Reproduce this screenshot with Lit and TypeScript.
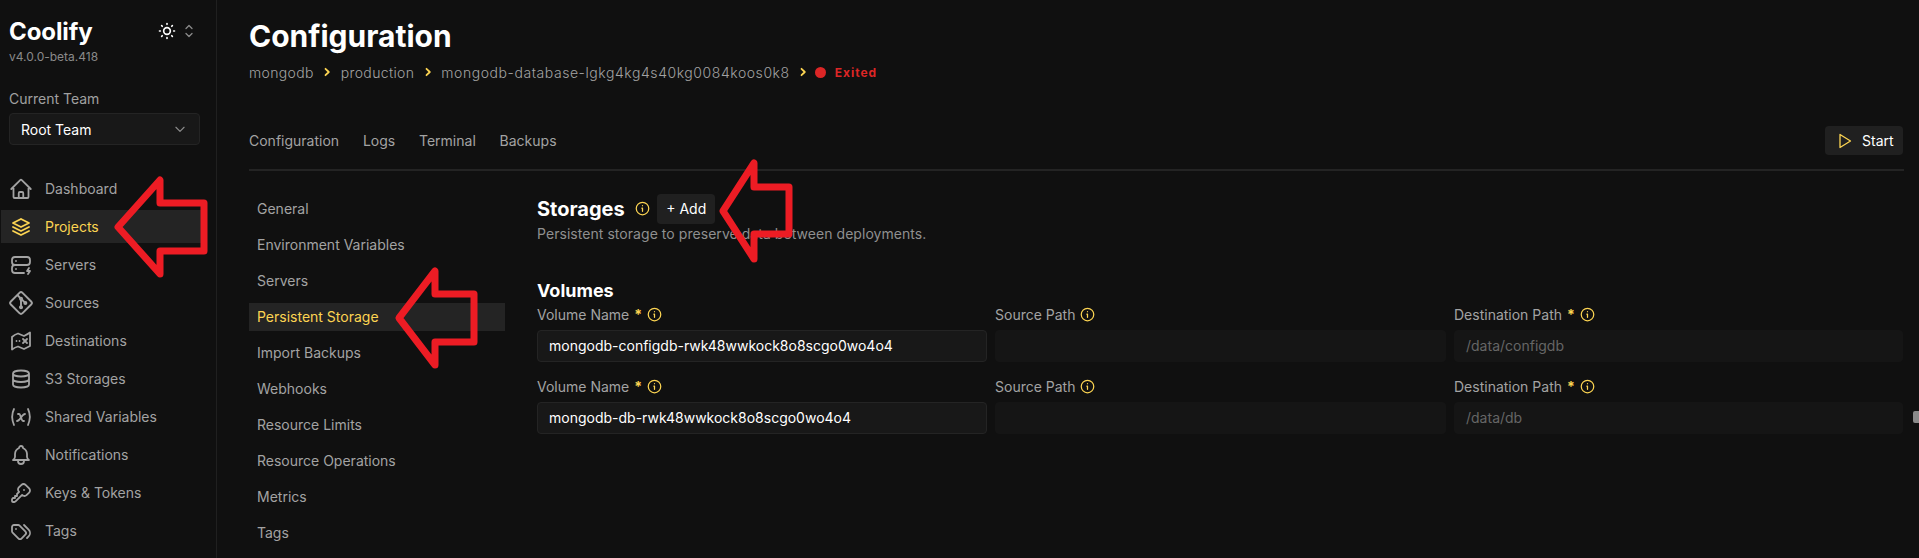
import { LitElement, html, css, svg } from "lit";
import { customElement } from "lit/decorators.js";

const ic = (d: string) => svg`<path d=${d}></path>`;
const NAV: [string, string][] = [
  ["Dashboard", "m2.25 12 8.954-8.955a1.126 1.126 0 0 1 1.591 0L21.75 12M4.5 9.75v10.125c0 .621.504 1.125 1.125 1.125H9.75v-4.875c0-.621.504-1.125 1.125-1.125h2.25c.621 0 1.125.504 1.125 1.125V21h4.125c.621 0 1.125-.504 1.125-1.125V9.75M8.25 21h8.25"],
  ["Projects", "M12 4L4 8l8 4 8-4-8-4M4 12l8 4 8-4M4 16l8 4 8-4"],
  ["Servers", "M3 7a3 3 0 0 1 3-3h12a3 3 0 0 1 3 3v2a3 3 0 0 1-3 3H6a3 3 0 0 1-3-3zM15 20H6a3 3 0 0 1-3-3v-2a3 3 0 0 1 3-3h12M7 8v.01M7 16v.01M20 15l-2 3h3l-2 3"],
  ["Sources", "M15 12a1 1 0 1 0 2 0a1 1 0 1 0-2 0M11 8a1 1 0 1 0 2 0a1 1 0 1 0-2 0M11 16a1 1 0 1 0 2 0a1 1 0 1 0-2 0M12 15V9M15 11l-2-2M11 7L9.1 5.1M13.446 2.6l7.955 7.954a2.045 2.045 0 0 1 0 2.892l-7.955 7.955a2.045 2.045 0 0 1-2.892 0l-7.955-7.955a2.045 2.045 0 0 1 0-2.892l7.955-7.955a2.045 2.045 0 0 1 2.892 0z"],
  ["Destinations", "M3 8C5 6 7 5 9 4.500L15 7C17 6 19 5 21 3.500V17C19 18 17 19 15 20L9 17.500C7 18 5 19 3 20.500zM7.500 12h.01M10.500 12h.01M14 10l4 4M18 10l-4 4"],
  ["S3 Storages", "M4 6.500a8 3 0 1 0 16 0a8 3 0 1 0-16 0M4 6.500V12a8 3 0 0 0 16 0V6.500M4 12v5.500a8 3 0 0 0 16 0V12"],
  ["Shared Variables", "M5 4c-2.500 5-2.500 10 0 16M19 4c2.500 5 2.500 10 0 16M9 9h1c1 0 1 1 2.016 3.527C13 15 13 16 14 16h1M8 16c1.500 0 3-2 4-3.500S14.500 9 16 9"],
  ["Notifications", "M10 5a2 2 0 1 1 4 0a7 7 0 0 1 4 6v3a4 4 0 0 0 2 3H4a4 4 0 0 0 2-3v-3a7 7 0 0 1 4-6M9 17v1a3 3 0 0 0 6 0v-1"],
  ["Keys & Tokens", "M16.555 3.843l3.602 3.602a2.877 2.877 0 0 1 0 4.069l-2.643 2.643a2.877 2.877 0 0 1-4.069 0l-.301-.301l-6.558 6.558a2 2 0 0 1-1.239.578l-.175.008H4.000a1 1 0 0 1-.993-.883L3 20.000v-1.172a2 2 0 0 1 .467-1.284l.119-.13l.414-.414h2v-2h2v-2l2.144-2.144l-.301-.301a2.877 2.877 0 0 1 0-4.069l2.643-2.643a2.877 2.877 0 0 1 4.069 0zM15 9h.01"],
  ["Tags", "M3 8v4.172a2 2 0 0 0 .586 1.414l5.710 5.710a2.410 2.410 0 0 0 3.408 0l3.592-3.592a2.410 2.410 0 0 0 0-3.408l-5.710-5.710A2 2 0 0 0 9.172 6H5a2 2 0 0 0-2 2zM18 19l1.592-1.592a4.820 4.820 0 0 0 0-6.816L15 6M7 10h-.01"],
];
const SUB = ["General", "Environment Variables", "Servers", "Persistent Storage", "Import Backups", "Webhooks", "Resource Limits", "Resource Operations", "Metrics", "Tags"];
const VOLS = [
  ["mongodb-configdb-rwk48wwkock8o8scgo0wo4o4", "/data/configdb"],
  ["mongodb-db-rwk48wwkock8o8scgo0wo4o4", "/data/db"],
];

const info = html`<svg class="info" viewBox="0 0 24 24" fill="none" stroke="#fcd452" stroke-width="2" stroke-linecap="round" stroke-linejoin="round"><circle cx="12" cy="12" r="10"></circle><path d="M12 16.500v-5h-1M12 7.500h.01"></path></svg>`;
const crumb = html`<svg class="crumb" viewBox="0 0 10 10" fill="none" stroke="#fcd452" stroke-width="1.800" stroke-linecap="round" stroke-linejoin="round"><path d="M3.500 1.800 6.800 5 3.500 8.200"></path></svg>`;
const arrow = (p: string) => svg`<polygon points=${p}></polygon>`;

@customElement("app-root")
export class AppRoot extends LitElement {
  static styles = css`
    :host { display: block; position: relative; width: 1919px; height: 558px; overflow: hidden; background: #101010; color: #fff; font-family: Inter, "Noto Sans", sans-serif; font-size: 14px; }
    .page { display: flex; height: 558px; }
    aside { width: 216px; flex: none; border-right: 1px solid #202020; height: 558px; box-sizing: content-box; }
    .brand { display: flex; justify-content: space-between; padding: 18px 0 0 9px; height: 50px; }
    .logo { font-size: 24px; line-height: 28px; font-weight: 700; letter-spacing: -.1px; }
    .ver { font-size: 12px; line-height: 16px; color: #8a8a8a; margin-top: 3px; }
    .theme { display: flex; align-items: center; gap: 6px; height: 26px; margin-right: 21px; }
    .theme svg { display: block; }
    .sun { width: 20px; height: 20px; }
    .updown { width: 12px; height: 14px; }
    .team { padding: 22px 16px 0 9px; }
    .team label { display: block; color: #a0a0a0; line-height: 17px; margin-bottom: 6px; }
    .select { display: flex; align-items: center; justify-content: space-between; height: 32px; box-sizing: border-box; padding: 0 12px 0 11px; background: #181818; border: 1px solid #242424; border-radius: 4px; font-size: 14px; }
    .select svg { width: 14px; height: 14px; }
    nav { display: flex; flex-direction: column; gap: 5px; padding: 27px 0 0 1px; }
    .item { display: flex; align-items: center; gap: 12px; height: 33px; width: 204px; padding-left: 8px; box-sizing: border-box; color: #a3a3a3; }
    .item svg { width: 24px; height: 24px; flex: none; fill: none; stroke: #a3a3a3; stroke-width: 1.800; stroke-linecap: round; stroke-linejoin: round; }
    .item:nth-child(4) svg { transform: scale(1.080); }
    .item.active { background: #242424; color: #fcd452; }
    .item.active svg { stroke: #fcd452; }
    main { flex: 1; padding: 0 15px 0 32px; min-width: 0; }
    h1 { margin: 0; padding-top: 18px; font-size: 30px; line-height: 36px; font-weight: 700; }
    .crumbs { display: flex; align-items: center; height: 20px; margin-top: 8px; color: #a3a3a3; font-weight: 300; letter-spacing: .35px; }
    .wide { letter-spacing: .56px; }
    .crumb { width: 10px; height: 10px; margin: 0 8.500px; flex: none; }
    .dot { width: 11px; height: 11px; background: #dc2626; border-radius: 50%; margin: 0 9px 0 -2px; flex: none; }
    .exited { color: #dc2626; font-size: 12px; font-weight: 700; letter-spacing: 1px; }
    .tabs { display: flex; align-items: center; justify-content: space-between; height: 29px; margin-top: 44px; }
    .tablist { display: flex; gap: 23.800px; color: #a3a3a3; }
    .btn { display: flex; align-items: center; background: #202020; border-radius: 4px; color: #fff; font-size: 14px; }
    .start { height: 29px; width: 78px; box-sizing: border-box; padding-left: 13px; gap: 10px; margin-right: 1px; }
    .start svg { width: 14px; height: 16px; }
    .rule { height: 1.500px; background: #242424; margin-top: 14px; }
    .body { display: flex; gap: 32px; margin-top: 22px; }
    .subnav { width: 256px; flex: none; display: flex; flex-direction: column; color: #a3a3a3; margin-top: 2px; }
    .subnav div { height: 28px; line-height: 28px; padding-left: 8px; margin-bottom: 8px; }
    .subnav .active { background: #242424; color: #fcd452; }
    .content { flex: 1; min-width: 0; }
    .h2row { display: flex; align-items: center; height: 30px; margin-top: 1px; }
    h2 { margin: 0; font-size: 20px; line-height: 28px; font-weight: 700; }
    .info { width: 15px; height: 15px; flex: none; }
    .h2row .info { margin: 0 7px 0 10px; }
    .add { height: 30px; width: 58px; justify-content: center; padding-left: 1px; box-sizing: border-box; font-size: 14px; }
    .desc { color: #8f8f8f; line-height: 20px; letter-spacing: .05px; }
    h3 { margin: 33px 0 1px; font-size: 18px; line-height: 28px; font-weight: 700; }
    .vrow { display: grid; grid-template-columns: 450px 451px 449px; gap: 8px; margin-bottom: 16px; }
    .vrow > div { display: flex; flex-direction: column; }
    .lab { display: flex; align-items: center; height: 18px; margin-bottom: 6px; color: #a3a3a3; }
    .star { color: #fcd452; font-weight: 700; margin: 0 5px; line-height: 14px; }
    .lab .info { margin-left: 5px; }
    .star + .info { margin-left: 0; }
    .input { height: 32px; box-sizing: border-box; padding: 0 11px; line-height: 30px; background: #181818; border: 1px solid #242424; border-radius: 4px; }
    .input.off { background: #151515; border-color: #151515; color: #666; }
    .thumb { position: absolute; left: 1913px; top: 411px; width: 6px; height: 12px; background: #8a8a8a; border-radius: 2px 0 0 2px; }
    .overlay { position: absolute; inset: 0; width: 1919px; height: 558px; pointer-events: none; }
    .overlay polygon { fill: none; stroke: #ed1c24; stroke-width: 7; stroke-linejoin: round; }
  `;

  render() {
    return html`
      <div class="page">
        <aside>
          <div class="brand">
            <div>
              <div class="logo">Coolify</div>
              <div class="ver">v4.0.0-beta.418</div>
            </div>
            <div class="theme">
              <svg class="sun" viewBox="0 0 24 24" fill="none" stroke="#fff" stroke-width="2" stroke-linecap="round"><path d="M8 12a4 4 0 1 0 8 0a4 4 0 1 0-8 0M3 12h1m8-9v1m8 8h1m-9 8v1M5.600 5.600l.7.7m12.100-.7l-.7.7m0 11.400l.7.7M6.300 17.700l-.7.7"></path></svg>
              <svg class="updown" viewBox="0 0 12 14" fill="none" stroke="#8a8a8a" stroke-width="1.300" stroke-linecap="round" stroke-linejoin="round"><path d="M3 4.500 6 1.500l3 3M3 9.500l3 3 3-3"></path></svg>
            </div>
          </div>
          <div class="team">
            <label>Current Team</label>
            <div class="select">Root Team
              <svg viewBox="0 0 24 24" fill="none" stroke="#8a8a8a" stroke-width="2" stroke-linecap="round" stroke-linejoin="round"><path d="M5 9l7 7 7-7"></path></svg>
            </div>
          </div>
          <nav>
            ${NAV.map(([n, d]) => html`<div class="item ${n === "Projects" ? "active" : ""}"><svg viewBox="0 0 24 24">${ic(d)}</svg>${n}</div>`)}
          </nav>
        </aside>
        <main>
          <h1>Configuration</h1>
          <div class="crumbs">
            mongodb${crumb}production${crumb}<span class="wide">mongodb-database-lgkg4kg4s40kg0084koos0k8</span>${crumb}<span class="dot"></span><span class="exited">Exited</span>
          </div>
          <div class="tabs">
            <div class="tablist"><span>Configuration</span><span>Logs</span><span>Terminal</span><span>Backups</span></div>
            <div class="btn start">
              <svg viewBox="0 0 14 16" fill="none" stroke="#fcd452" stroke-width="1.300" stroke-linejoin="round"><path d="M2 1.500 12.500 8 2 14.500z"></path></svg>
              Start
            </div>
          </div>
          <div class="rule"></div>
          <div class="body">
            <div class="subnav">
              ${SUB.map((s) => html`<div class=${s === "Persistent Storage" ? "active" : ""}>${s}</div>`)}
            </div>
            <div class="content">
              <div class="h2row"><h2>Storages</h2>${info}<div class="btn add">+ Add</div></div>
              <div class="desc">Persistent storage to preserve data between deployments.</div>
              <h3>Volumes</h3>
              ${VOLS.map(([name, dest]) => html`
                <div class="vrow">
                  <div><div class="lab">Volume Name<span class="star">*</span>${info}</div><div class="input">${name}</div></div>
                  <div><div class="lab">Source Path${info}</div><div class="input off"></div></div>
                  <div><div class="lab">Destination Path<span class="star">*</span>${info}</div><div class="input off">${dest}</div></div>
                </div>`)}
            </div>
          </div>
        </main>
      </div>
      <div class="thumb"></div>
      <svg class="overlay" viewBox="0 0 1919 558">
        ${arrow("118,227 160,180 160,203 204,203 204,251 160,251 160,274")}
        ${arrow("399,318 435,271 435,294 474,294 474,342 435,342 435,365")}
        ${arrow("723,211 754,163 754,187 789,187 789,234 754,234 754,259")}
      </svg>
    `;
  }
}
